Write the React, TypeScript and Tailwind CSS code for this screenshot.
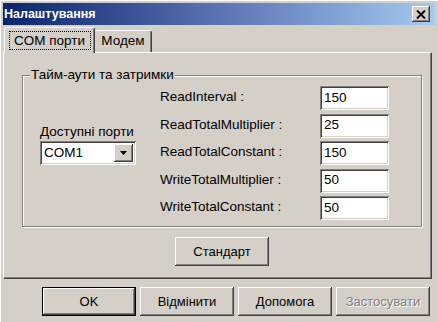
import React from 'react';

const raised =
  'shadow-[inset_-1px_-1px_#404040,inset_1px_1px_#ffffff,inset_-2px_-2px_#808080,inset_2px_2px_#d4d0c8]';
const sunken =
  'shadow-[inset_1px_1px_#808080,inset_-1px_-1px_#ffffff,inset_2px_2px_#404040,inset_-2px_-2px_#d4d0c8]';

const timeouts = [
  { label: 'ReadInterval :', value: '150' },
  { label: 'ReadTotalMultiplier :', value: '25' },
  { label: 'ReadTotalConstant :', value: '150' },
  { label: 'WriteTotalMultiplier :', value: '50' },
  { label: 'WriteTotalConstant :', value: '50' },
];

const Button: React.FC<{ label: string; isDefault?: boolean; disabled?: boolean }> = ({ label, isDefault, disabled }) => (
  <button
    type="button"
    className={
      isDefault
        ? 'w-[94px] h-[29px] border border-black bg-[#d4d0c8] shadow-[inset_-1px_-1px_#404040,inset_1px_1px_#ffffff,inset_-2px_-2px_#808080] text-[13px] text-black'
        : disabled
          ? `w-[94px] h-[29px] bg-[#d4d0c8] ${raised} text-[13px] text-[#808080] [text-shadow:1px_1px_0_#ffffff]`
          : `w-[94px] h-[29px] bg-[#d4d0c8] ${raised} text-[13px] text-black`
    }
  >
    {label}
  </button>
);

const App: React.FC = () => {
  return (
    <div className="w-[438px] h-[322px] bg-[#d4d0c8] overflow-hidden shadow-[inset_1px_1px_#ffffff] font-['Liberation_Sans',Arial,sans-serif] text-black select-none">
      {/* title bar */}
      <div className="mx-[3px] mt-[3px] h-[22px] flex items-center justify-between bg-gradient-to-r from-[#0a246a] via-[#5a74b4] to-[#a6caf0]">
        <span className="pl-[1px] text-[12.5px] font-bold text-white">Налаштування</span>
        <div className={`mr-[5px] w-[18px] h-[16px] bg-[#d4d0c8] ${raised} flex items-center justify-center`}>
          <svg width="10" height="9" viewBox="0 0 10 9">
            <path d="M1 0.5 L9 8.5 M9 0.5 L1 8.5" stroke="#000" strokeWidth="2" />
          </svg>
        </div>
      </div>

      {/* tabs */}
      <div className="flex items-end h-[27px] pl-[4px]">
        <div className="relative z-10 -mb-[1px] h-[26px] w-[91px] bg-[#d4d0c8] border-t border-l border-white border-r border-r-[#404040] rounded-t-[3px] shadow-[inset_-1px_0_#808080] flex items-center justify-center">
          <span className="border border-dotted border-black px-[4px] h-[19px] w-[82px] flex items-center justify-center text-[13.5px] leading-none">
            COM порти
          </span>
        </div>
        <div className="h-[22px] w-[57px] bg-[#d4d0c8] border-t border-white border-r border-r-[#404040] rounded-t-[3px] shadow-[inset_-1px_0_#808080] flex items-center justify-center text-[13.5px]">
          Модем
        </div>
      </div>

      {/* tab panel */}
      <div className="mx-[3px] w-[429px] h-[227px] border-t border-l border-white border-b border-r border-b-[#404040] border-r-[#404040] shadow-[inset_-1px_-1px_#808080] pt-[14px] pl-[18px]">
        <fieldset className="w-[400px] h-[160px] border border-[#808080] shadow-[inset_1px_1px_#ffffff,1px_1px_0_#ffffff]">
          <legend className="ml-[7px] px-[1px] bg-[#d4d0c8] text-[13.5px] leading-[16px]">Тайм-аути та затримки</legend>
          <div className="flex pl-[17px] pt-[3px]">
            <div className="flex flex-col pt-[38px] w-[96px]">
              <span className="text-[13.5px] leading-[16px] whitespace-nowrap">Доступні порти</span>
              <div className={`mt-[1px] h-[24px] w-[96px] bg-white ${sunken} flex items-center pl-[4px] pr-[3px]`}>
                <span className="flex-1 text-[13.5px]">COM1</span>
                <div className={`w-[19px] h-[18px] bg-[#d4d0c8] ${raised} flex items-center justify-center`}>
                  <svg width="7" height="4" viewBox="0 0 7 4">
                    <path d="M0 0 H7 L3.5 4 Z" fill="#000" />
                  </svg>
                </div>
              </div>
            </div>
            <div className="ml-[24px] flex flex-col gap-[3.5px]">
              {timeouts.map((t) => (
                <div key={t.label} className="flex items-center h-[24px]">
                  <span className="w-[160px] text-[13.5px] leading-none -mt-[2px]">{t.label}</span>
                  <div className={`w-[69px] h-[24px] bg-white ${sunken} flex items-center pl-[4px] text-[13.5px]`}>
                    {t.value}
                  </div>
                </div>
              ))}
            </div>
          </div>
        </fieldset>
        <div className="mt-[10px] ml-[153px]">
          <Button label="Стандарт" />
        </div>
      </div>

      {/* dialog buttons */}
      <div className="flex gap-[4px] pl-[42px] pt-[8px]">
        <Button label="OK" isDefault />
        <Button label="Відмінити" />
        <Button label="Допомога" />
        <Button label="Застосувати" disabled />
      </div>
    </div>
  );
};

export default App;
